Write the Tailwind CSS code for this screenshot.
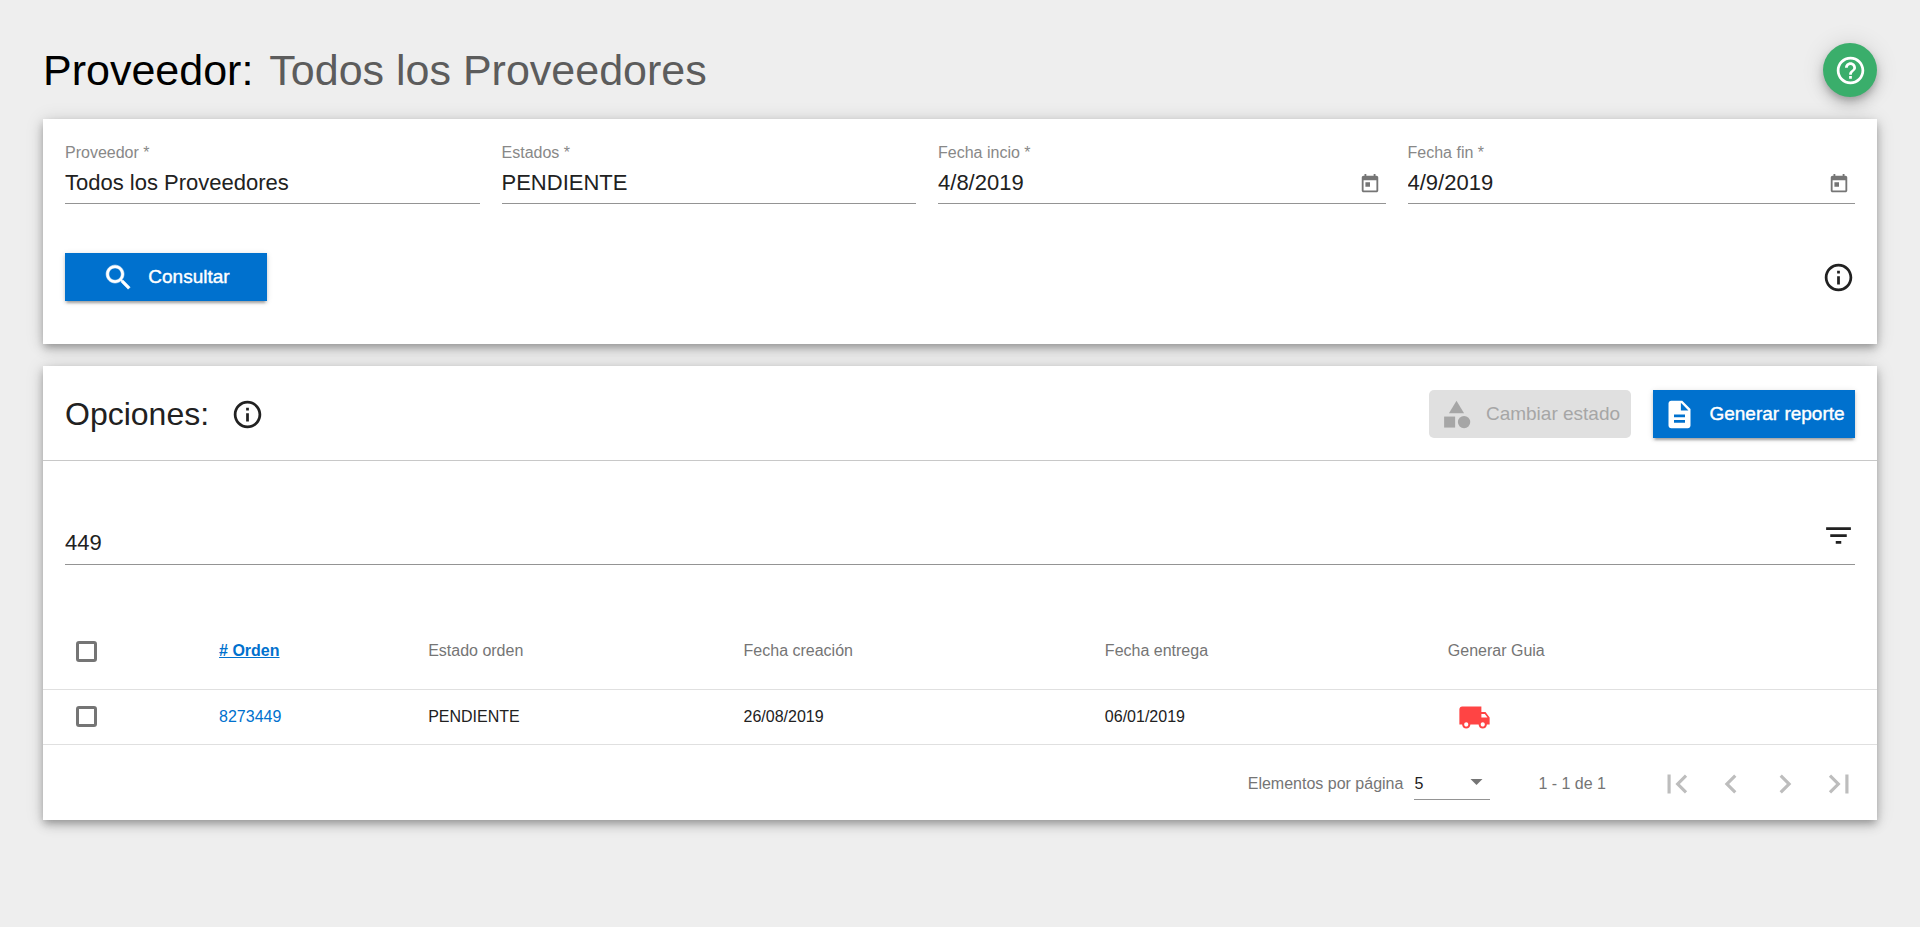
<!DOCTYPE html>
<html lang="es">
<head>
<meta charset="utf-8">
<meta name="viewport" content="width=device-width, initial-scale=1">
<title>Proveedor</title>
<script src="https://cdn.jsdelivr.net/npm/@tailwindcss/browser@4"></script>
</head>
<body class="min-h-screen bg-[#eeeeee] p-[43px] font-['Liberation_Sans',Arial,sans-serif] text-[16px] text-[#212121]">

<svg class="hidden" aria-hidden="true">
  <symbol id="info" viewBox="0 0 24 24"><path d="M11 17h2v-6h-2v6zm1-15C6.480 2 2 6.480 2 12s4.480 10 10 10 10-4.480 10-10S17.520 2 12 2zm0 18c-4.410 0-8-3.590-8-8s3.590-8 8-8 8 3.590 8 8-3.590 8-8 8zM11 9h2V7h-2v2z"/></symbol>
  <symbol id="today" viewBox="0 0 24 24"><path d="M19 3h-1V1h-2v2H8V1H6v2H5c-1.110 0-1.990.9-1.990 2L3 19c0 1.100.89 2 2 2h14c1.100 0 2-.9 2-2V5c0-1.100-.9-2-2-2zm0 16H5V8h14v11zM7 10h5v5H7z"/></symbol>
</svg>

<header class="flex h-[54px] items-center justify-between">
  <h1 class="text-[43px] leading-[54px] text-black">Proveedor: <span class="ml-1 text-[#5c5c5c]">Todos los Proveedores</span></h1>
  <button type="button" aria-label="Ayuda" class="flex size-[54px] items-center justify-center rounded-full bg-[#3aae6b] text-white shadow-[0_4px_7px_-1px_rgba(0,0,0,0.2),0_8px_14px_0_rgba(0,0,0,0.14),0_1px_24px_0_rgba(0,0,0,0.12)]">
    <svg class="size-[33px] fill-current" viewBox="0 0 24 24"><path d="M11 18h2v-2h-2v2zm1-16C6.480 2 2 6.480 2 12s4.480 10 10 10 10-4.480 10-10S17.520 2 12 2zm0 18c-4.410 0-8-3.590-8-8s3.590-8 8-8 8 3.590 8 8-3.590 8-8 8zm0-14c-2.210 0-4 1.790-4 4h2c0-1.100.9-2 2-2s2 .9 2 2c0 2-3 1.750-3 5h2c0-2.250 3-2.500 3-5 0-2.210-1.790-4-4-4z"/></svg>
  </button>
</header>

<main class="mt-[22px] flex flex-col gap-[22px]">
  <section class="bg-white px-[22px] pt-[22px] pb-[43px] shadow-[0_4px_7px_-1px_rgba(0,0,0,0.2),0_5px_11px_0_rgba(0,0,0,0.16),0_1px_18px_0_rgba(0,0,0,0.12)]">
    <div class="grid grid-cols-[415fr_415fr_448fr_448fr] gap-[22px]">
      <div class="flex flex-col border-b border-[#949494] pb-1.5">
        <label for="proveedor" class="mb-0.5 h-6 leading-6 text-[#888888]">Proveedor *</label>
        <input id="proveedor" type="text" value="Todos los Proveedores" class="h-[30px] w-full min-w-0 text-[22px] outline-none">
      </div>
      <div class="flex flex-col border-b border-[#949494] pb-1.5">
        <label for="estados" class="mb-0.5 h-6 leading-6 text-[#888888]">Estados *</label>
        <input id="estados" type="text" value="PENDIENTE" class="h-[30px] w-full min-w-0 text-[22px] outline-none">
      </div>
      <div class="flex flex-col border-b border-[#949494] pb-1.5">
        <label for="inicio" class="mb-0.5 h-6 leading-6 text-[#888888]">Fecha incio *</label>
        <div class="flex items-end pr-[5px]">
          <input id="inicio" type="text" value="4/8/2019" class="h-[30px] w-full min-w-0 text-[22px] outline-none">
          <button type="button" aria-label="Abrir calendario de inicio" class="shrink-0 pb-0.5 text-[#757575]"><svg class="size-[22px] fill-current"><use href="#today"/></svg></button>
        </div>
      </div>
      <div class="flex flex-col border-b border-[#949494] pb-1.5">
        <label for="fin" class="mb-0.5 h-6 leading-6 text-[#888888]">Fecha fin *</label>
        <div class="flex items-end pr-[5px]">
          <input id="fin" type="text" value="4/9/2019" class="h-[30px] w-full min-w-0 text-[22px] outline-none">
          <button type="button" aria-label="Abrir calendario de fin" class="shrink-0 pb-0.5 text-[#757575]"><svg class="size-[22px] fill-current"><use href="#today"/></svg></button>
        </div>
      </div>
    </div>
    <div class="mt-[49px] flex items-center justify-between">
      <button type="button" class="flex h-12 w-[202px] items-center justify-center gap-[13px] bg-[#0071ce] text-[19px] text-white shadow-[0_4px_2px_-2px_rgba(0,0,0,0.2),0_2px_3px_0_rgba(0,0,0,0.14),0_1px_6px_0_rgba(0,0,0,0.12)] [-webkit-text-stroke:0.4px_white]">
        <svg class="size-[33px] fill-current stroke-white stroke-[0.4]" viewBox="0 0 24 24"><path d="M15.500 14h-.79l-.28-.27C15.410 12.590 16 11.110 16 9.500 16 5.910 13.090 3 9.500 3S3 5.910 3 9.500 5.910 16 9.500 16c1.610 0 3.090-.59 4.230-1.570l.27.28v.79l5 4.990L20.490 19l-4.990-5zm-6 0C7.010 14 5 11.990 5 9.500S7.010 5 9.500 5 14 7.010 14 9.500 11.990 14 9.500 14z"/></svg>
        Consultar
      </button>
      <button type="button" aria-label="Información de la consulta"><svg class="size-[33px] fill-current"><use href="#info"/></svg></button>
    </div>
  </section>

  <section class="bg-white shadow-[0_4px_7px_-1px_rgba(0,0,0,0.2),0_5px_11px_0_rgba(0,0,0,0.16),0_1px_18px_0_rgba(0,0,0,0.12)]">
    <div class="flex h-[95px] items-center justify-between border-b border-[#c8c8c8] px-[22px] pt-0.5">
      <div class="flex items-center gap-[22px]">
        <h2 class="text-[32px] leading-12">Opciones:</h2>
        <button type="button" aria-label="Información de las opciones"><svg class="size-[33px] fill-current"><use href="#info"/></svg></button>
      </div>
      <div class="flex gap-[22px]">
        <button type="button" disabled class="flex h-12 w-[202px] items-center justify-center gap-[13px] rounded-[5px] bg-[#e0e0e0] text-[19px] text-[#a6a6a6]">
          <svg class="size-[33px] fill-current" viewBox="0 0 24 24"><path d="M12 2l-5.500 9h11z"/><circle cx="17.500" cy="17.500" r="4.500"/><path d="M3 13.500h8v8H3z"/></svg>
          Cambiar estado
        </button>
        <button type="button" class="flex h-12 w-[202px] items-center justify-center gap-[13px] bg-[#0071ce] text-[19px] text-white shadow-[0_4px_2px_-2px_rgba(0,0,0,0.2),0_2px_3px_0_rgba(0,0,0,0.14),0_1px_6px_0_rgba(0,0,0,0.12)] [-webkit-text-stroke:0.4px_white]">
          <svg class="size-[33px] fill-current" viewBox="0 0 24 24"><path d="M14 2H6c-1.100 0-1.990.9-1.990 2L4 20c0 1.100.89 2 1.990 2H18c1.100 0 2-.9 2-2V8l-6-6zm2 16H8v-2h8v2zm0-4H8v-2h8v2zm-3-5V3.500L18.500 9H13z"/></svg>
          Generar reporte
        </button>
      </div>
    </div>

    <div class="mx-[22px] mt-[58px] flex h-[46px] justify-between border-b border-[#949494]">
      <input type="text" aria-label="Filtrar órdenes" value="449" class="mt-2 h-[30px] min-w-0 flex-1 text-[22px] outline-none">
      <button type="button" aria-label="Filtrar" class="h-[33px]"><svg class="size-[33px] fill-current" viewBox="0 0 24 24"><path d="M10 18h4v-2h-4v2zM3 6v2h18V6H3zm3 7h12v-2H6v2z"/></svg></button>
    </div>

    <table class="mt-[49px] w-full table-fixed border-collapse text-left">
      <thead>
        <tr class="h-[75px] border-b border-[#e0e0e0] text-[#757575]">
          <th class="w-[9.6%] pl-[33px]"><input type="checkbox" aria-label="Seleccionar todas" class="block size-[21px] appearance-none rounded-[3px] border-3 border-[#757575]"></th>
          <th class="w-[11.4%] font-bold"><a href="#" class="text-[#0071ce] underline"># Orden</a></th>
          <th class="w-[17.2%] font-normal">Estado orden</th>
          <th class="w-[19.7%] font-normal">Fecha creación</th>
          <th class="w-[18.7%] font-normal">Fecha entrega</th>
          <th class="font-normal">Generar Guia</th>
        </tr>
      </thead>
      <tbody>
        <tr class="h-[55px] border-b border-[#e0e0e0]">
          <td class="pl-[33px]"><input type="checkbox" aria-label="Seleccionar orden 8273449" class="block size-[21px] appearance-none rounded-[3px] border-3 border-[#757575]"></td>
          <td><a href="#" class="text-[#0071ce]">8273449</a></td>
          <td>PENDIENTE</td>
          <td>26/08/2019</td>
          <td>06/01/2019</td>
          <td class="pl-[10px]"><button type="button" aria-label="Generar guia" class="block pt-0.5 text-[#ff4444]"><svg class="size-[33px] fill-current" viewBox="0 0 24 24"><path d="M20 8h-3V4H3c-1.100 0-2 .9-2 2v11h2c0 1.660 1.340 3 3 3s3-1.340 3-3h6c0 1.660 1.340 3 3 3s3-1.340 3-3h2v-5l-3-4zM6 18.500c-.83 0-1.500-.67-1.500-1.500s.67-1.500 1.500-1.500 1.500.67 1.500 1.500-.67 1.500-1.500 1.500zm13.500-9l1.960 2.500H17V9.500h2.500zm-1.500 9c-.83 0-1.500-.67-1.500-1.500s.67-1.500 1.500-1.500 1.500.67 1.500 1.500-.67 1.500-1.500 1.500z"/></svg></button></td>
        </tr>
      </tbody>
    </table>

    <div class="flex h-[75px] items-center justify-end pt-1 pr-[11px] text-[#757575]">
      <label for="pagesize" class="mr-[11px]">Elementos por página</label>
      <div class="relative mr-12 w-[76px] border-b border-[#949494]">
        <select id="pagesize" class="block h-[30px] w-full appearance-none text-[#212121] outline-none"><option>5</option></select>
        <svg class="pointer-events-none absolute top-[10px] right-[7px] h-[6px] w-[13px] fill-[#757575]" viewBox="0 0 14 7"><path d="M0 0h14L7 7z"/></svg>
      </div>
      <span class="mr-[44px]">1 - 1 de 1</span>
      <nav aria-label="Paginación" class="flex text-[#bdbdbd]">
        <button type="button" disabled aria-label="Primera página" class="flex size-[54px] items-center justify-center"><svg class="size-[38px] fill-current" viewBox="0 0 24 24"><path d="M18.410 16.590L13.820 12l4.590-4.590L17 6l-6 6 6 6zM6 6h2v12H6z"/></svg></button>
        <button type="button" disabled aria-label="Página anterior" class="flex size-[54px] items-center justify-center"><svg class="size-[38px] fill-current" viewBox="0 0 24 24"><path d="M15.410 7.410L14 6l-6 6 6 6 1.410-1.410L10.830 12z"/></svg></button>
        <button type="button" disabled aria-label="Página siguiente" class="flex size-[54px] items-center justify-center"><svg class="size-[38px] fill-current" viewBox="0 0 24 24"><path d="M10 6L8.590 7.410 13.170 12l-4.580 4.590L10 18l6-6z"/></svg></button>
        <button type="button" disabled aria-label="Última página" class="flex size-[54px] items-center justify-center"><svg class="size-[38px] fill-current" viewBox="0 0 24 24"><path d="M5.590 7.410L10.180 12l-4.590 4.590L7 18l6-6-6-6zM16 6h2v12h-2z"/></svg></button>
      </nav>
    </div>
  </section>
</main>
</body>
</html>
